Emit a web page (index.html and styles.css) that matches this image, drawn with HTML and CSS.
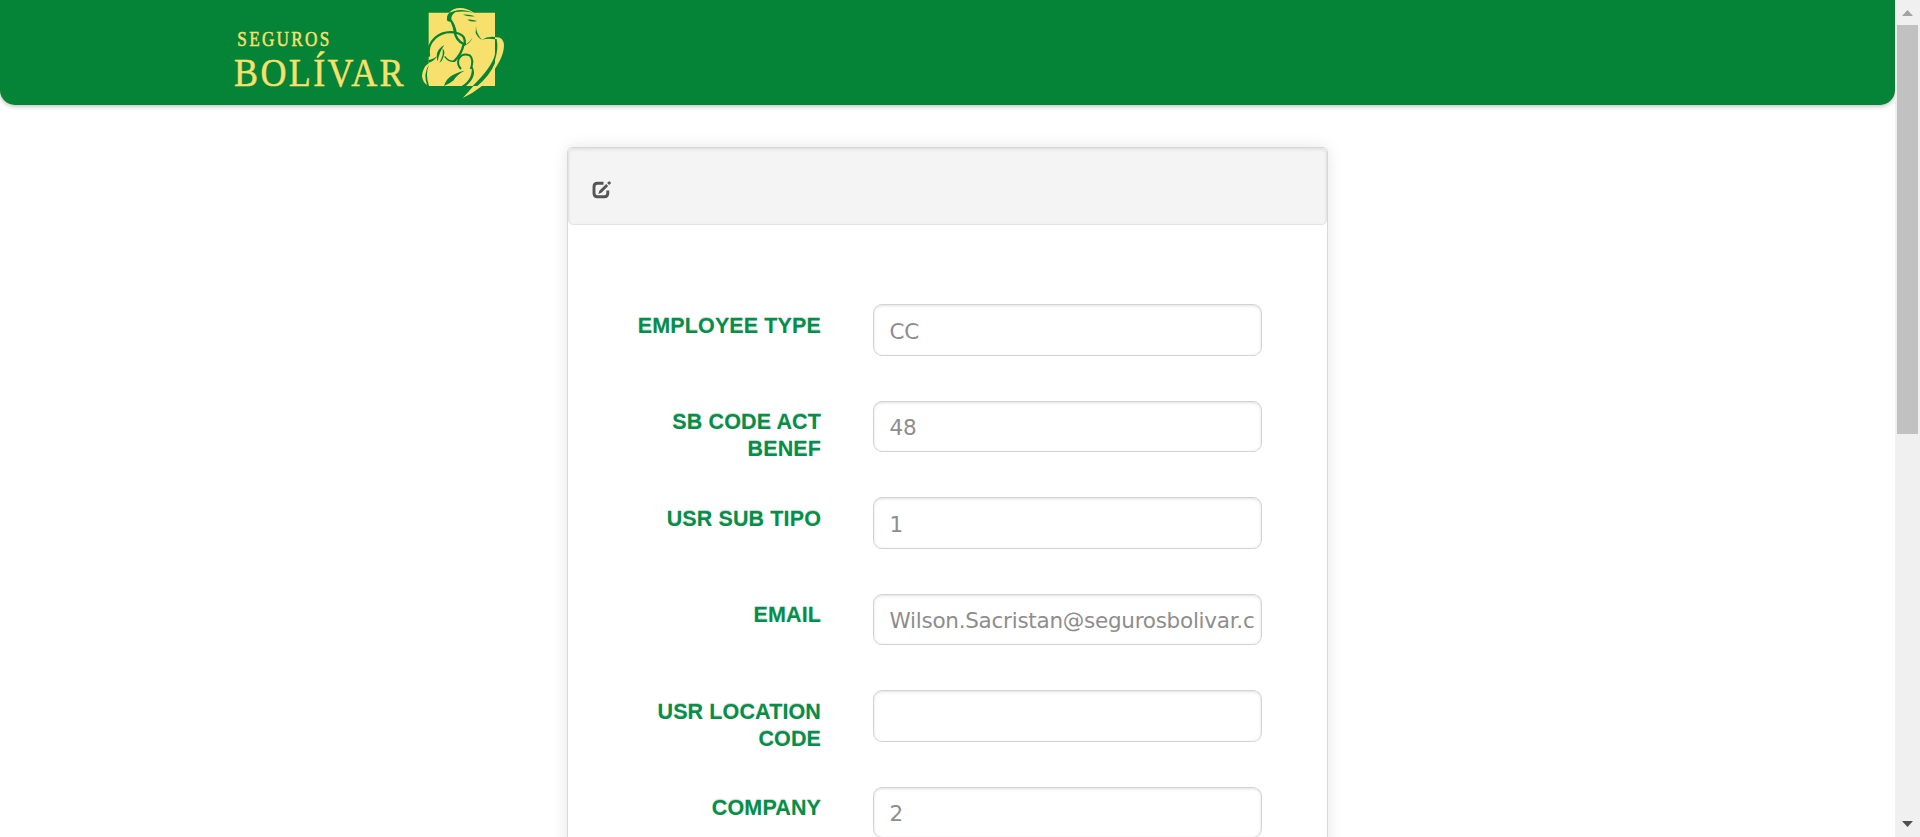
FILE: index.html
```html
<!DOCTYPE html>
<html lang="en">
<head>
<meta charset="utf-8">
<title>Seguros Bolívar</title>
<link rel="stylesheet" href="styles.css">
</head>
<body>
<div class="viewport">
  <div class="page">
    <header class="topbar">
      <svg class="logo" viewBox="0 0 300 105" role="img" aria-label="Seguros Bolívar">
        <g class="logo-text">
          <text transform="translate(17.3 45.5) scale(.86 1)" font-size="20" textLength="107">SEGUROS</text>
          <text transform="translate(14 86) scale(.9 1)" font-size="40" textLength="188.5">BOLÍVAR</text>
        </g>
        <g transform="translate(190 0) scale(.33333)">
          <path class="yellow" d="M56 38H118C130 20 165 18 192 38H255V112Q280 108 282 135C282 160 270 184 255 206V258H216Q190 279 158 294Q174 278 190 258H56Q38 250 36 228Q38 202 56 190Z"/>
          <g class="green">
            <path d="M118 38Q108 47 112 63L122 66Q128 78 131 96L140 97Q137 75 124 58Q123 45 137 36Q160 32 190 38Q160 25 133 33Z"/>
            <path d="M158 44Q175 41 195 49Q176 51 158 44ZM172 59Q185 57 201 63Q186 68 172 59ZM198 77Q198 101 216 119Q204 114 197 99Z"/>
            <path d="M216 119Q233 108 255 111V118Q235 114 216 119ZM255 117H260Q266 145 255 180ZM255 163Q246 202 188 258H202Q240 226 255 189ZM57 194Q45 222 57 258H52Q38 221 57 194Z"/>
            <path d="M56 180Q75 175 82 167Q73 184 56 188ZM103 135Q72 153 83 184Q88 155 103 135ZM97 145Q103 163 88 188Q99 181 102 164Q106 154 97 145Z"/>
            <path d="M102 258Q110 224 164 212Q140 224 131 241Q119 252 102 258ZM184 194Q206 225 168 258H155Q192 235 184 194ZM188 112Q178 130 160 138Q181 132 188 112Z"/>
          </g>
          <g class="line">
            <path d="M57 170C48 125 88 91 133 97Q164 103 164 121Q164 133 166 136" stroke-width="7"/>
            <path d="M134 96Q138 121 161 132Q155 163 132 184" stroke-width="7"/>
            <path d="M104 169Q117 187 133 183" stroke-width="4"/>
            <path d="M153 207Q139 191 147 175Q158 158 179 166Q193 179 182 207" stroke-width="6"/>
          </g>
        </g>
      </svg>
    </header>
    <main class="card">
      <div class="card-head">
        <svg class="edit" viewBox="0 0 20 18"><path d="M11.5 2.2H5.5Q2 2.2 2 5.7V12.3Q2 15.8 5.5 15.8H12.3Q15.8 15.8 15.8 12.3V9.5" fill="none" stroke="#555" stroke-width="2.9"/><path d="M6.3 13 7.5 9.6 14.2 3 16.2 5 9.5 11.7ZM15.1 2.1 16.5.8Q17-.2 18.4 1.1 19.3 2.1 18.4 2.8L17.1 4.1Z" fill="#555"/></svg>
      </div>
      <form class="fields">
        <div class="row"><label for="f1">EMPLOYEE TYPE</label><input id="f1" value="CC"></div>
        <div class="row"><label for="f2">SB CODE ACT BENEF</label><input id="f2" value="48"></div>
        <div class="row"><label for="f3">USR SUB TIPO</label><input id="f3" value="1"></div>
        <div class="row"><label for="f4">EMAIL</label><input id="f4" value="Wilson.Sacristan@segurosbolivar.com"></div>
        <div class="row"><label for="f5">USR LOCATION CODE</label><input id="f5" value=""></div>
        <div class="row"><label for="f6">COMPANY</label><input id="f6" value="2"></div>
      </form>
    </main>
  </div>
  <div class="scrollbar">
    <svg class="arrow" viewBox="0 0 25 25"><path d="M7 16H18L12.5 10Z" fill="#a3a3a3"/></svg>
    <div class="thumb"></div>
    <svg class="arrow" viewBox="0 0 25 25"><path d="M7 9H18L12.5 15Z" fill="#505050"/></svg>
  </div>
</div>
</body>
</html>
```
FILE: styles.css
```css
* { box-sizing: border-box; }
body { margin: 0; background: #fff; }
.viewport { display: flex; height: 837px; overflow: hidden; }
.page { flex: 1; display: flex; flex-direction: column; align-items: center; overflow: hidden; }
.topbar {
  flex: none; width: 100%; height: 105px; padding-left: 220px;
  background: #058337; border-radius: 0 0 15px 15px;
  box-shadow: 0 1px 5px rgba(0, 0, 0, .3);
}
.logo { display: block; width: 300px; height: 105px; }
.logo-text { font-family: "Liberation Serif", serif; fill: #f7e06b; stroke: #f7e06b; stroke-width: .5; }
.yellow { fill: #f7e06b; }
.green { fill: #058337; }
.line { fill: none; stroke: #058337; }
.card {
  flex: none; width: 761px; height: 1400px; margin-top: 42px;
  border: 1px solid #d8d8d8; border-radius: 5px;
  box-shadow: 0 0 15px rgba(0, 0, 0, .1);
}
.card-head {
  height: 77px; padding: 32px 0 0 23px; background: #f4f4f4;
  border: 1px solid #e3e3e3; border-radius: 5px;
  box-shadow: inset 0 1px 3px rgba(0, 0, 0, .07);
}
.edit { display: block; width: 20px; height: 18px; }
.fields { padding: 79px 65px 0 60px; }
.row { display: grid; grid-template-columns: 193px 389px; column-gap: 52px; height: 96.5px; align-items: start; }
.row label {
  padding-top: 8.9px; text-align: right; color: #028f48;
  font: bold 21.5px/27px "Liberation Sans", Arial, sans-serif; letter-spacing: .12px;
  text-shadow: 0 -1px 1px rgba(0, 0, 0, .2);
}
.row input {
  width: 389px; height: 51.5px; padding: 3px 7px 0 15.5px; color: #8d8d8d;
  font: 21.5px "DejaVu Sans", Verdana, sans-serif; letter-spacing: -.26px;
  background: #fff; border: 1px solid #d3d3d3; border-radius: 9px;
  box-shadow: inset 0 1px 3px rgba(0, 0, 0, .12);
}
.scrollbar { width: 25px; background: #f0f0f0; display: flex; flex-direction: column; align-items: center; }
.arrow { display: block; flex: none; width: 25px; height: 25px; }
.thumb { width: 21px; height: 409px; margin-bottom: 378px; background: #c1c1c1; flex: none; }
```
